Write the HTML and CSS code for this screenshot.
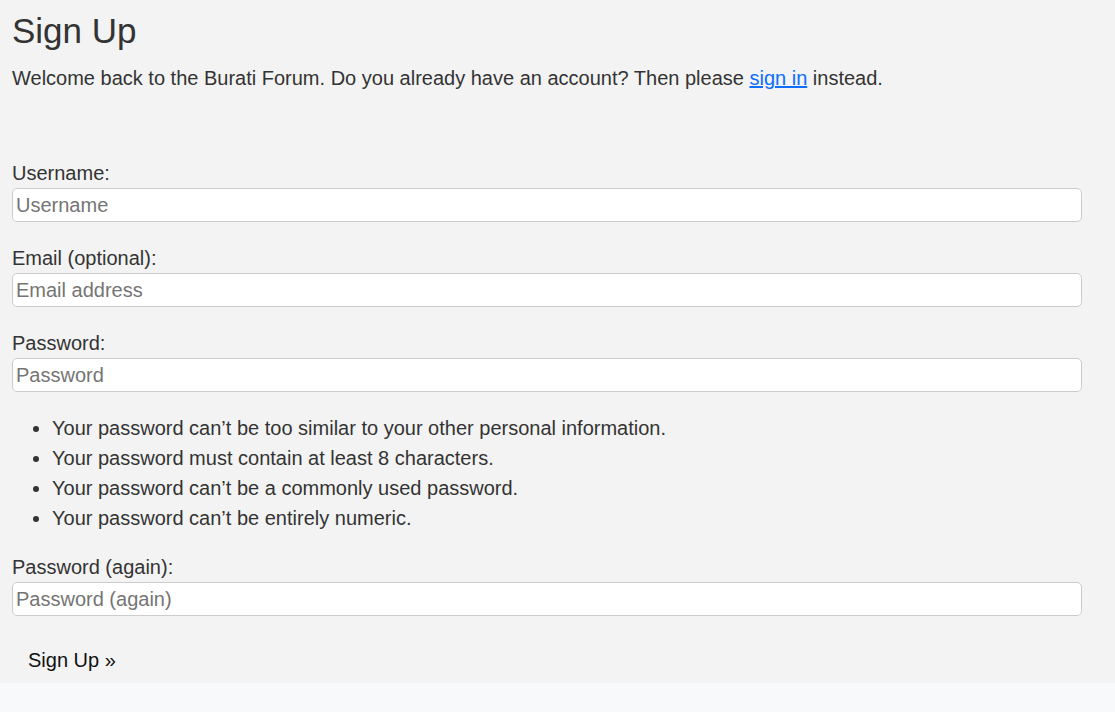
FILE: index.html
```html
<!DOCTYPE html>
<html lang="en">
<head>
<meta charset="utf-8">
<title>Sign Up</title>
<link rel="stylesheet" href="styles.css">
</head>
<body>
<main class="page">
  <h1 class="title">Sign Up</h1>
  <p class="intro">Welcome back to the Burati Forum. Do you already have an account? Then please <a href="#" class="link">sign in</a> instead.</p>
  <form class="form">
    <div class="field">
      <label class="label" for="username">Username:</label>
      <input class="input" id="username" type="text" placeholder="Username">
    </div>
    <div class="field">
      <label class="label" for="email">Email (optional):</label>
      <input class="input" id="email" type="email" placeholder="Email address">
    </div>
    <div class="field">
      <label class="label" for="password1">Password:</label>
      <input class="input" id="password1" type="password" placeholder="Password">
    </div>
    <ul class="help">
      <li>Your password can’t be too similar to your other personal information.</li>
      <li>Your password must contain at least 8 characters.</li>
      <li>Your password can’t be a commonly used password.</li>
      <li>Your password can’t be entirely numeric.</li>
    </ul>
    <div class="field">
      <label class="label" for="password2">Password (again):</label>
      <input class="input" id="password2" type="password" placeholder="Password (again)">
    </div>
    <button class="submit" type="submit">Sign Up »</button>
  </form>
</main>
</body>
</html>
```

FILE: styles.css
```css
html, body {
  margin: 0;
  padding: 0;
}
body {
  background: #f8f9fa;
  font-family: "Liberation Sans", Arial, sans-serif;
  color: #333333;
  font-size: 20px;
  line-height: 30px;
}
.page {
  background: #f3f3f3;
  padding: 10px 33px 2px 12px;
}
.title {
  margin: 0;
  font-size: 35px;
  line-height: 42px;
  font-weight: 400;
  color: #333333;
}
.intro {
  margin: 11px 0 65px 0;
}
.link {
  color: #0d6efd;
  text-decoration: underline;
}
.form {
  display: flex;
  flex-direction: column;
}
.field {
  display: flex;
  flex-direction: column;
  margin-bottom: 21px;
}
.label {
  display: block;
  line-height: 30px;
}
.input {
  box-sizing: border-box;
  width: 100%;
  height: 34px;
  margin: 0;
  padding: 0 3px;
  border: 1px solid #cccccc;
  border-radius: 5px;
  background: #ffffff;
  font-family: "Liberation Sans", Arial, sans-serif;
  font-size: 20px;
  color: #333333;
}
.input::placeholder {
  color: #757575;
}
.help {
  margin: 0 0 19px 0;
  padding-left: 40px;
}
.submit {
  align-self: flex-start;
  margin-top: 2px;
  padding: 6px 16px;
  border: none;
  background: transparent;
  font-family: "Liberation Sans", Arial, sans-serif;
  font-size: 20px;
  line-height: 30px;
  color: #111111;
  cursor: pointer;
}
```
